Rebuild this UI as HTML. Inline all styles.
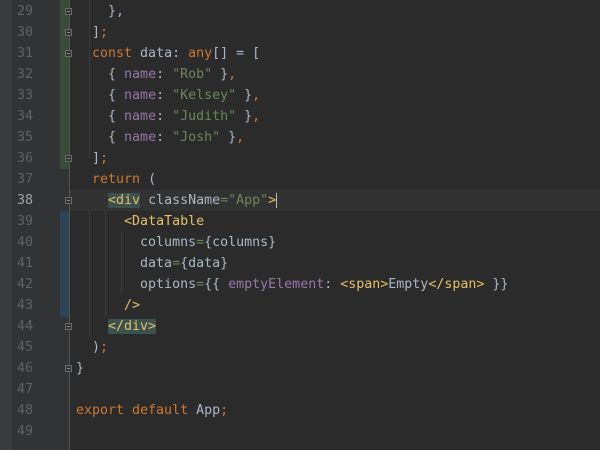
<!DOCTYPE html><html><head><style>
body{margin:0;width:600px;height:450px;overflow:hidden;background:#2b2b2b;font-family:"DejaVu Sans Mono","Liberation Mono",monospace;font-size:13.3px;position:relative}
.strip{position:absolute;left:0;top:0;width:12px;height:450px;background:#3a3b3d}
.gut{position:absolute;left:12px;top:0;width:58px;height:450px;background:#313335}
.sep{position:absolute;left:69px;top:0;width:1px;height:450px;background:#555}
.row{position:absolute;left:0;width:600px;height:21px;line-height:21px}
.n{position:absolute;left:12px;width:21px;text-align:right;color:#606366}
.c{position:absolute;left:76px;white-space:pre;color:#a9b7c6;letter-spacing:0.0px}
.k{color:#cc7832}.p{color:#9876aa}.s{color:#6a8759}.t{color:#e8bf6a}.g{color:#6a8759}
.bar{position:absolute;left:60px;width:9px}
.f{position:absolute;left:65px;width:7px;height:7px;border:1px solid #6b6b6b;background:#313335;box-sizing:border-box}
.f:after{content:"";position:absolute;left:1px;top:2px;width:3px;height:1px;background:#888}
.hl{background:#3b514d}
.ig{position:absolute;width:1px;background:#3b3b3b}
</style></head><body>
<div class="strip"></div><div class="gut"></div>
<div class="bar" style="top:0;height:169px;background:#384c38"></div>
<div class="bar" style="top:211px;height:106px;background:#2e4356"></div>
<div class="row" style="top:190px;left:70px;width:530px;background:#323232"></div>
<div class="sep"></div>
<div class="ig" style="left:89px;top:0;height:158px"></div>
<div class="ig" style="left:89px;top:211px;height:126px"></div>
<div class="ig" style="left:105px;top:211px;height:105px"></div>
<div class="ig" style="left:121px;top:232px;height:63px"></div>
<div class="f" style="top:8px"></div><div class="f" style="top:29px"></div><div class="f" style="top:50px"></div>
<div class="f" style="top:155px"></div><div class="f" style="top:197px"></div><div class="f" style="top:323px"></div><div class="f" style="top:365px"></div>
<div class="row" style="top:1px"><span class="n">29</span><span class="c">    },</span></div>
<div class="row" style="top:22px"><span class="n">30</span><span class="c">  ]<span class="k">;</span></span></div>
<div class="row" style="top:43px"><span class="n">31</span><span class="c">  <span class="k">const</span> data: <span class="k">any</span>[] = [</span></div>
<div class="row" style="top:64px"><span class="n">32</span><span class="c">    { <span class="p">name</span>: <span class="s">"Rob"</span> }<span class="k">,</span></span></div>
<div class="row" style="top:85px"><span class="n">33</span><span class="c">    { <span class="p">name</span>: <span class="s">"Kelsey"</span> }<span class="k">,</span></span></div>
<div class="row" style="top:106px"><span class="n">34</span><span class="c">    { <span class="p">name</span>: <span class="s">"Judith"</span> }<span class="k">,</span></span></div>
<div class="row" style="top:127px"><span class="n">35</span><span class="c">    { <span class="p">name</span>: <span class="s">"Josh"</span> }<span class="k">,</span></span></div>
<div class="row" style="top:148px"><span class="n">36</span><span class="c">  ]<span class="k">;</span></span></div>
<div class="row" style="top:169px"><span class="n">37</span><span class="c">  <span class="k">return</span> (</span></div>
<div class="row" style="top:190px"><span class="n" style="color:#a4a3a3">38</span><span class="c">    <span class="t hl">&lt;div</span> className<span class="g">=</span><span class="s">"App"</span><span class="t">&gt;</span><span style="border-left:1px solid #bbb"></span></span></div>
<div class="row" style="top:211px"><span class="n">39</span><span class="c">      <span class="t">&lt;DataTable</span></span></div>
<div class="row" style="top:232px"><span class="n">40</span><span class="c">        columns<span class="g">=</span>{columns}</span></div>
<div class="row" style="top:253px"><span class="n">41</span><span class="c">        data<span class="g">=</span>{data}</span></div>
<div class="row" style="top:274px"><span class="n">42</span><span class="c">        options<span class="g">=</span>{{ <span class="p">emptyElement</span>: <span class="t">&lt;span&gt;</span>Empty<span class="t">&lt;/span&gt;</span> }}</span></div>
<div class="row" style="top:295px"><span class="n">43</span><span class="c">      <span class="t">/&gt;</span></span></div>
<div class="row" style="top:316px"><span class="n">44</span><span class="c">    <span class="t hl">&lt;/div&gt;</span></span></div>
<div class="row" style="top:337px"><span class="n">45</span><span class="c">  )<span class="k">;</span></span></div>
<div class="row" style="top:358px"><span class="n">46</span><span class="c">}</span></div>
<div class="row" style="top:379px"><span class="n">47</span><span class="c"></span></div>
<div class="row" style="top:400px"><span class="n">48</span><span class="c"><span class="k">export default</span> App<span class="k">;</span></span></div>
<div class="row" style="top:421px"><span class="n">49</span><span class="c"></span></div>
</body></html>
